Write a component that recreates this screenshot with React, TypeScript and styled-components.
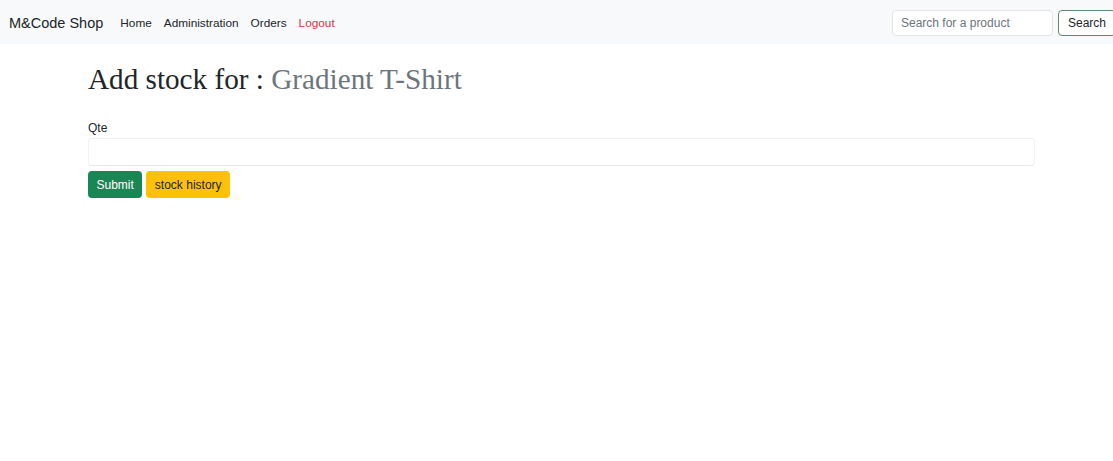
import React from "react";
import styled, { createGlobalStyle } from "styled-components";

const Global = createGlobalStyle`
  html, body { margin: 0; padding: 0; background: #fff; }
  body { font-family: "Liberation Sans", Arial, sans-serif; color: #212529; }
  * { box-sizing: border-box; }
`;

const Nav = styled.nav`
  height: 44px;
  background: #f8f9fa;
  display: flex;
  align-items: center;
  padding: 0 0 0 9px;
`;

const Brand = styled.a`
  font-size: 14.5px;
  color: #212529;
  text-decoration: none;
  margin-right: 11px;
  margin-top: 1px;
`;

const Links = styled.div`
  display: flex;
  align-items: center;
  flex: 1;
  margin-top: 2px;
`;

const NavLink = styled.a<{ $danger?: boolean }>`
  font-size: 11.8px;
  padding: 0 6px;
  color: ${(p) => (p.$danger ? "#dc3545" : "#212529")};
  text-decoration: none;
`;

const SearchForm = styled.form`
  display: flex;
  align-items: center;
  gap: 5px;
  margin-right: -3px;
  margin-top: 2px;
`;

const SearchInput = styled.input`
  width: 161px;
  height: 26px;
  border: 1px solid #e3e5e8;
  border-radius: 4px;
  background: #fff;
  padding: 0 8px;
  font-family: inherit;
  font-size: 12px;
  &::placeholder { color: #6c757d; }
`;

const SearchButton = styled.button`
  height: 26px;
  width: 58px;
  border: 1px solid #5e8a73;
  border-radius: 4px;
  background: #fff;
  font-family: inherit;
  font-size: 12px;
  color: #212529;
  padding: 0 0 0 9px;
  text-align: left;
`;

const Main = styled.main`
  padding: 18px 0 0 88px;
  width: 1035px;
`;

const Title = styled.h1`
  font-family: "Liberation Serif", "Times New Roman", serif;
  font-weight: 400;
  font-size: 29.2px;
  margin: 0 0 24px 0;
  color: #212529;
  line-height: 1.2;
`;

const Muted = styled.span`
  color: #6c757d;
`;

const Label = styled.label`
  display: block;
  font-size: 12px;
  margin-bottom: 3px;
`;

const QtyInput = styled.input`
  display: block;
  width: 100%;
  height: 28px;
  border: 1px solid #f1f2f4;
  border-bottom-color: #e6e8eb;
  border-radius: 4px;
  background: #fff;
  font-family: inherit;
  font-size: 12px;
  margin-bottom: 5px;
`;

const Actions = styled.div`
  display: flex;
  gap: 4px;
`;

const Button = styled.button<{ $variant: "success" | "warning" }>`
  height: 27px;
  padding: 0 8.5px;
  border: none;
  border-radius: 4px;
  font-family: inherit;
  font-size: 12px;
  background: ${(p) => (p.$variant === "success" ? "#198754" : "#ffc107")};
  color: ${(p) => (p.$variant === "success" ? "#fff" : "#212529")};
`;

export default function App() {
  return (
    <>
      <Global />
      <Nav>
        <Brand href="#">M&amp;Code Shop</Brand>
        <Links>
          <NavLink href="#">Home</NavLink>
          <NavLink href="#">Administration</NavLink>
          <NavLink href="#">Orders</NavLink>
          <NavLink href="#" $danger>Logout</NavLink>
        </Links>
        <SearchForm onSubmit={(e) => e.preventDefault()}>
          <SearchInput placeholder="Search for a product" />
          <SearchButton type="submit">Search</SearchButton>
        </SearchForm>
      </Nav>
      <Main>
        <Title>
          Add stock for : <Muted>Gradient T-Shirt</Muted>
        </Title>
        <form onSubmit={(e) => e.preventDefault()}>
          <Label htmlFor="qte">Qte</Label>
          <QtyInput id="qte" type="number" />
          <Actions>
            <Button $variant="success" type="submit">Submit</Button>
            <Button $variant="warning" type="button">stock history</Button>
          </Actions>
        </form>
      </Main>
    </>
  );
}
